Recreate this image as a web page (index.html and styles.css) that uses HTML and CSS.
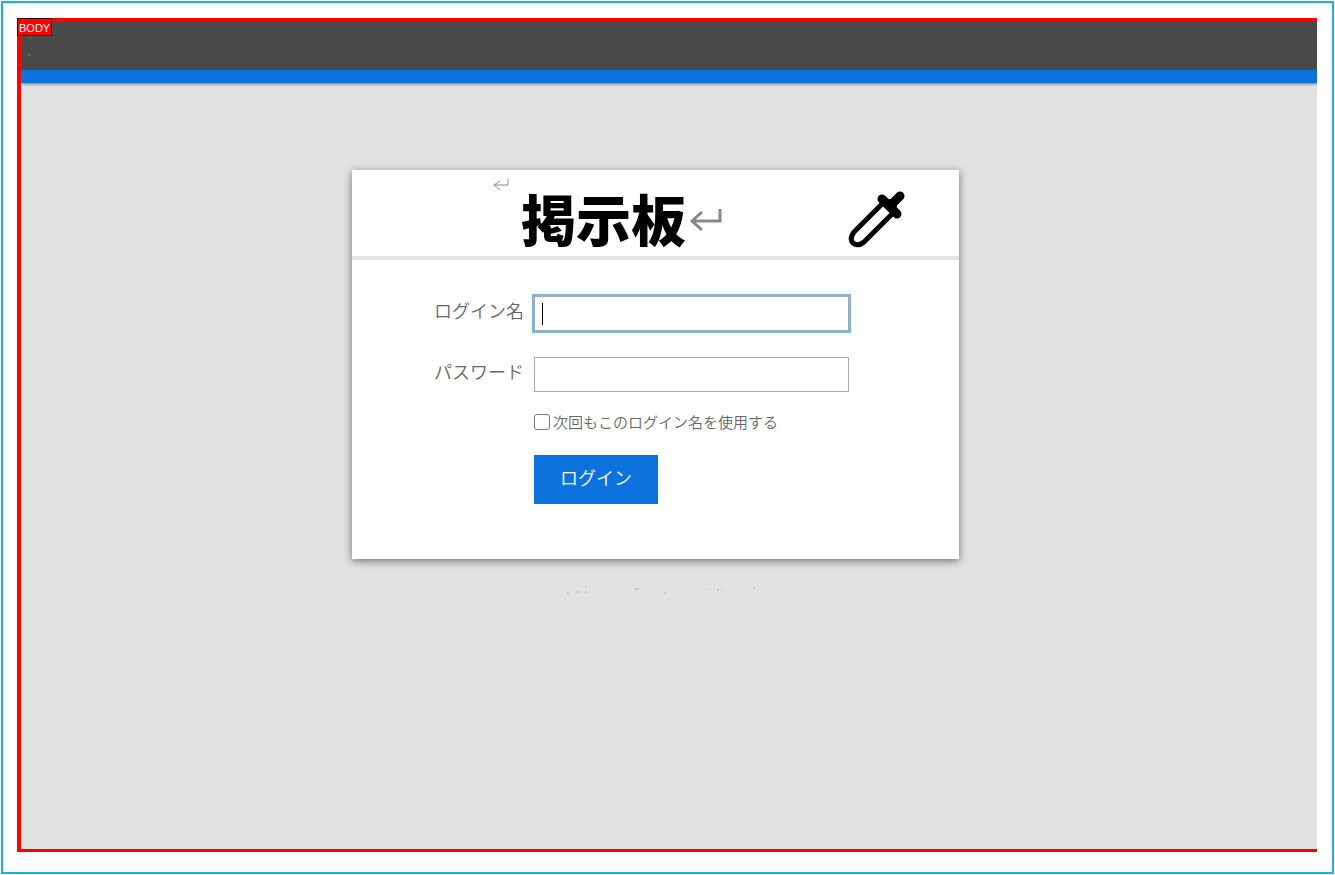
FILE: index.html
```html
<!DOCTYPE html>
<html lang="ja">
<head>
    <meta charset="UTF-8">
    <meta name="viewport" content="width=device-width, initial-scale=1.0">
    <title>掲示板</title>
    <link rel="stylesheet" href="styles.css">
</head>
<body>
    <div class="frame">
        <div class="outline">
            <span class="outline-tag">BODY</span>
            <header class="top-bar">
                <svg class="top-mark" viewBox="0 0 6 22" aria-hidden="true">
                    <path d="M3 1L1 3M1 17v2l2 1"/>
                </svg>
            </header>
            <main class="content">
                <section class="card">
                    <div class="card-header">
                        <svg class="return-small" viewBox="0 0 16 12" aria-hidden="true">
                            <path d="M15 0v6H1M7 2L1 6l6 5"/>
                        </svg>
                        <h1>掲示板</h1>
                        <svg class="return-large" viewBox="0 0 32 22" aria-hidden="true">
                            <path d="M30 0v12H2M12 3L2 12l10 9"/>
                        </svg>
                        <svg class="dropper" viewBox="0 0 60 60" aria-hidden="true">
                            <path class="tube" d="M36 14L7 43Q2 50 6 54Q11 58 17 53L46 24"/>
                            <path class="bulb" d="M35 10L50 25"/>
                            <path class="bulb" d="M43 17L53 7"/>
                            <path class="neck" d="M35 13L43 11L49 17L46 25Z"/>
                        </svg>
                    </div>
                    <form class="login-form">
                        <label for="login">ログイン名</label>
                        <div class="field field-active">
                            <input type="text" id="login" name="login">
                        </div>
                        <label for="password">パスワード</label>
                        <div class="field">
                            <input type="password" id="password" name="password">
                        </div>
                        <div class="remember">
                            <input type="checkbox" id="remember" name="remember">
                            <label for="remember">次回もこのログイン名を使用する</label>
                        </div>
                        <button type="submit">ログイン</button>
                    </form>
                </section>
                <svg class="specks" viewBox="0 0 200 12" aria-hidden="true">
                    <path d="M11 7h2M13 10h1M21 6h2M29 0h2M29 6h2M79 3h4M108 7h2M150 3h1M161 4h2M165 4h1M197 2h2"/>
                </svg>
            </main>
        </div>
    </div>
</body>
</html>
```
FILE: styles.css
```css
* { box-sizing: border-box; }
body {
    margin: 0;
    padding: 1px;
    min-height: 100vh;
    display: flex;
    background: #fff;
    color: #666;
    font-family: "Liberation Sans", "Noto Sans CJK JP", sans-serif;
}
.frame {
    flex: 1;
    display: flex;
    border: 2px solid #14b1ef;
    padding: 15px 15px 20px 14px;
}
.outline {
    position: relative;
    flex: 1;
    display: flex;
    flex-direction: column;
    border: solid #f00;
    border-width: 4px 0 3px 4px;
    background: #e2e2e2;
}
.outline-tag {
    position: absolute;
    z-index: 1;
    top: -4px;
    left: -4px;
    padding: 3px 1px 1px;
    border: 1px solid #400;
    background: #f00;
    color: #fff;
    font-size: 11px;
    line-height: 12px;
}
.top-bar {
    height: 61px;
    padding: 14px 7px;
    background: #4a4a4a;
    border-bottom: 13px solid #0c73de;
    box-shadow: 0 1px 3px rgba(0, 0, 0, 0.5);
    clip-path: inset(0 0 -5px 0);
}
.top-mark { display: block; width: 6px; height: 22px; }
.top-mark path { fill: none; stroke: #777; }

.content {
    display: flex;
    flex-direction: column;
    align-items: center;
    padding: 87px 27px 0 0;
}
.card {
    width: 607px;
    max-width: 100%;
    background: #fff;
    box-shadow: 0 2px 8px rgba(0, 0, 0, 0.5);
}
.card-header {
    display: flex;
    align-items: flex-start;
    height: 90px;
    padding: 9px 52px 0 141px;
    border-bottom: 4px solid #e2e2e2;
}
.card-header svg { flex: none; fill: none; stroke: #888; }
.return-small { width: 16px; height: 12px; }
h1 {
    margin: 0 4px 0 12px;
    color: #000;
    font-family: "Noto Sans CJK JP", sans-serif;
    font-size: 55px;
    font-weight: 900;
    line-height: 76px;
}
.return-large { width: 32px; height: 22px; margin-top: 30px; stroke-width: 3; }
.card-header .dropper {
    width: 60px;
    height: 60px;
    margin: 10px 0 0 auto;
    stroke: #000;
    stroke-linecap: round;
    stroke-linejoin: round;
}
.tube { stroke-width: 5; }
.bulb { stroke-width: 9; }
.neck { fill: #000; stroke-width: 2; }

.login-form {
    display: grid;
    grid-template-columns: 172px 315px;
    column-gap: 10px;
    padding: 36px 0 55px;
    font-family: "Noto Sans CJK JP", sans-serif;
    font-size: 18px;
    font-weight: 350;
}
.login-form > label {
    line-height: 28px;
    text-align: right;
}
.field {
    position: relative;
    height: 35px;
    margin-bottom: 26px;
}
.field input {
    width: 100%;
    height: 100%;
    padding: 0 8px;
    border: 1px solid #aaa;
    background: #fff;
    font: inherit;
    outline: none;
}
.field-active input { box-shadow: 0 0 0 2px #78b8e8; }
/* text cursor in the first field */
.field-active::after {
    content: "";
    position: absolute;
    top: 7px;
    left: 8px;
    width: 1px;
    height: 22px;
    background: #000;
}
.remember {
    grid-column: 2;
    display: flex;
    align-items: center;
    gap: 3px;
    height: 16px;
    margin: -4px 0 25px;
    font-size: 15px;
    line-height: 16px;
}
.remember input {
    appearance: none;
    width: 16px;
    height: 16px;
    margin: 0;
    border: 1px solid #777;
    border-radius: 3px;
    background: #fff;
}
button {
    grid-column: 2;
    width: 124px;
    height: 49px;
    padding: 0 0 6px;
    border: none;
    background: #0c73de;
    color: #fff;
    font: inherit;
}
.specks { width: 200px; height: 12px; margin-top: 27px; }
.specks path { fill: none; stroke: #aaa; }
```
